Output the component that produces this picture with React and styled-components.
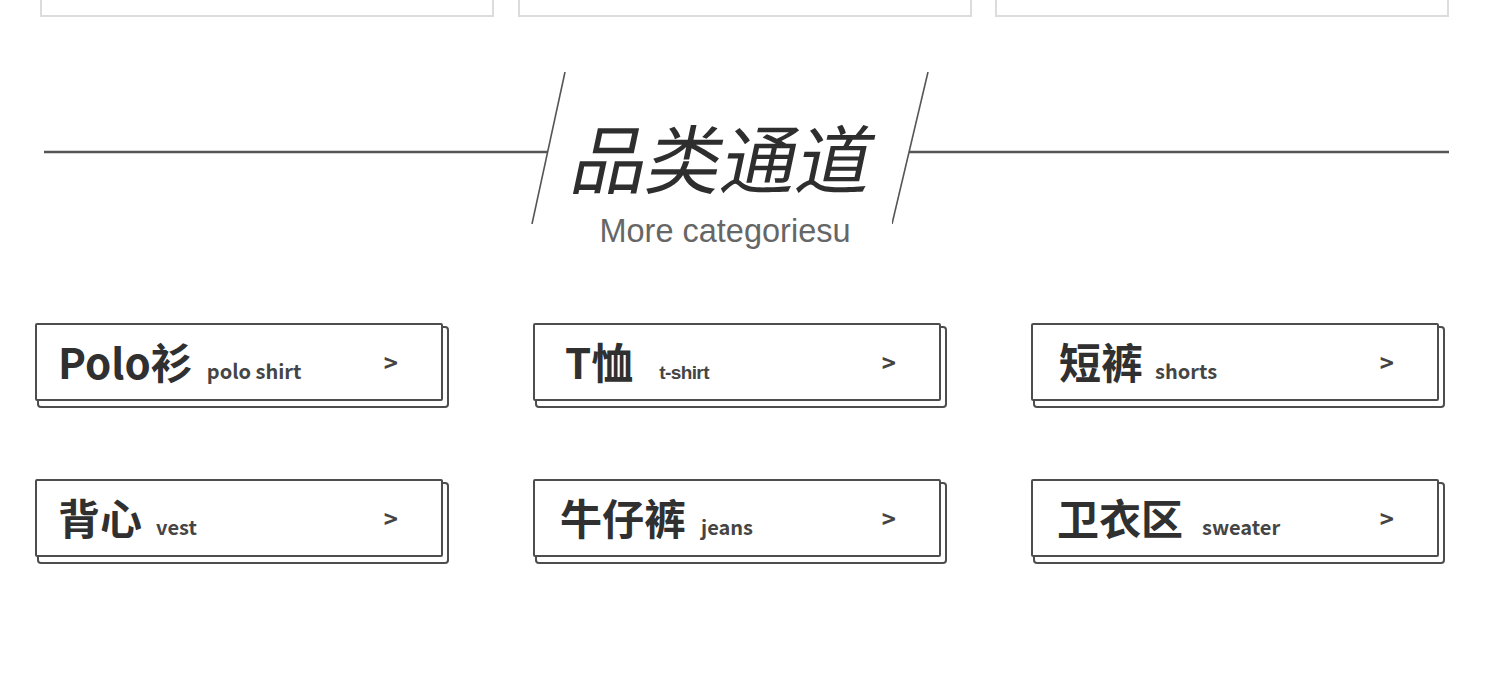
import React from 'react';
import styled, { createGlobalStyle } from 'styled-components';

const GlobalStyle = createGlobalStyle`
  html, body {
    margin: 0;
    padding: 0;
    background: #fff;
  }

  body {
    font-family: 'Noto Sans CJK SC', 'Noto Sans', sans-serif;
    color: #333;
  }
`;

const Page = styled.div`
  width: 1500px;
  height: 678px;
  overflow: hidden;
`;

const TopRow = styled.div`
  display: grid;
  grid-template-columns: repeat(3, 454px);
  column-gap: 23.5px;
  padding-left: 40px;
`;

const TopBox = styled.div`
  height: 15px;
  border: 2px solid #dcdcdc;
  border-top: none;
`;

const Heading = styled.div`
  display: flex;
  align-items: flex-start;
  margin-top: 55px;
  padding-left: 44px;
`;

const Deco = styled.svg`
  flex: none;
  display: block;
`;

const TitleBlock = styled.div`
  flex: none;
  box-sizing: border-box;
  width: 326px;
  display: flex;
  flex-direction: column;
  align-items: center;
  padding-top: 46px;
  padding-right: 8px;
`;

const Title = styled.h2`
  margin: 0;
  font-size: 75px;
  line-height: 75px;
  font-weight: 400;
  color: #2e2e2e;
  white-space: nowrap;
  transform: skewX(-12deg);
`;

const Subtitle = styled.div`
  margin-top: 22px;
  font-family: 'Liberation Sans', Arial, sans-serif;
  font-size: 32.5px;
  line-height: 32px;
  color: #666;
  white-space: nowrap;
`;

const Grid = styled.div`
  display: grid;
  grid-template-columns: repeat(3, 408px);
  column-gap: 90px;
  row-gap: 78px;
  margin-top: 76px;
  padding-left: 35px;
`;

const Card = styled.a`
  display: flex;
  align-items: center;
  height: 74px;
  padding-left: ${(p) => p.$indent}px;
  border: 2px solid #4d4d4d;
  border-radius: 2px;
  background: #fff;
  box-shadow: 4px 5px 0 0 #fff, 4px 5px 0 2px #4d4d4d;
  color: #333;
  text-decoration: none;
`;

const Label = styled.span`
  display: flex;
  align-items: baseline;
  white-space: nowrap;
`;

const Name = styled.span`
  font-size: 42px;
  line-height: 42px;
  font-weight: 700;
  color: #303030;
`;

const Sub = styled.span`
  margin-left: ${(p) => p.$gap}px;
  font-family: ${(p) =>
    p.$plain
      ? "'Liberation Sans', Arial, sans-serif"
      : "'Noto Sans CJK SC', 'Noto Sans', sans-serif"};
  font-size: ${(p) => (p.$plain ? 19 : 20)}px;
  letter-spacing: ${(p) => (p.$plain ? '-0.6px' : '0')};
  font-weight: 700;
  color: #454545;
`;

const Arrow = styled.span`
  margin-left: auto;
  margin-right: 43px;
  font-size: 24px;
  line-height: 24px;
  font-weight: 700;
  color: #444;
`;

const categories = [
  { name: 'Polo衫', sub: 'polo shirt', indent: 21, gap: 14 },
  { name: 'T恤', sub: 't-shirt', indent: 30, gap: 26, plain: true },
  { name: '短裤', sub: 'shorts', indent: 26, gap: 12 },
  { name: '背心', sub: 'vest', indent: 21, gap: 14 },
  { name: '牛仔裤', sub: 'jeans', indent: 25, gap: 15 },
  { name: '卫衣区', sub: 'sweater', indent: 24, gap: 19 },
];

const App = () => (
  <Page>
    <GlobalStyle />
    <TopRow>
      <TopBox />
      <TopBox />
      <TopBox />
    </TopRow>

    <Heading>
      <Deco width="522" height="152" viewBox="0 0 522 152">
        <line x1="0" y1="80" x2="504" y2="80" stroke="#555" strokeWidth="2.5" />
        <line x1="521" y1="0" x2="488" y2="152" stroke="#555" strokeWidth="1.6" />
      </Deco>
      <TitleBlock>
        <Title>品类通道</Title>
        <Subtitle>More categoriesu</Subtitle>
      </TitleBlock>
      <Deco width="557" height="152" viewBox="0 0 557 152">
        <line x1="17" y1="80" x2="557" y2="80" stroke="#555" strokeWidth="2.5" />
        <line x1="36" y1="0" x2="0" y2="152" stroke="#555" strokeWidth="1.6" />
      </Deco>
    </Heading>

    <Grid>
      {categories.map((c) => (
        <Card key={c.name} href="#" $indent={c.indent}>
          <Label>
            <Name>{c.name}</Name>
            <Sub $gap={c.gap} $plain={c.plain}>
              {c.sub}
            </Sub>
          </Label>
          <Arrow>&gt;</Arrow>
        </Card>
      ))}
    </Grid>
  </Page>
);

export default App;
